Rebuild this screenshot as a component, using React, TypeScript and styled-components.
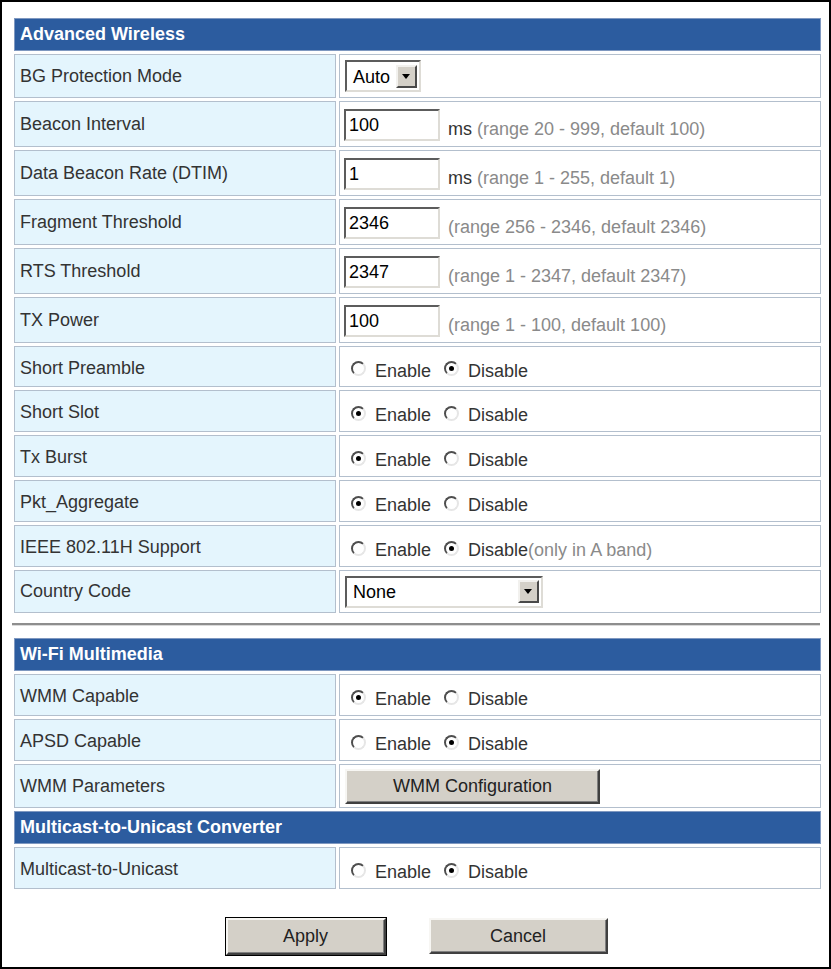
import styled, { createGlobalStyle } from 'styled-components';

const GlobalStyle = createGlobalStyle`
  body {
    margin: 0;
    background: #ffffff;
    font-family: 'Liberation Sans', Arial, sans-serif;
  }
`;

type Choice = { kind: 'radio'; on: boolean; note?: string };
type Field = { kind: 'input'; value: string; unit?: string; hint: string };
type Pick = { kind: 'select'; value: string; width: number };
type Action = { kind: 'button'; text: string };
type RowData = { label: string; h: number; body: Choice | Field | Pick | Action };

const wireless: RowData[] = [
  { label: 'BG Protection Mode', h: 44, body: { kind: 'select', value: 'Auto', width: 76 } },
  { label: 'Beacon Interval', h: 46, body: { kind: 'input', value: '100', unit: 'ms', hint: '(range 20 - 999, default 100)' } },
  { label: 'Data Beacon Rate (DTIM)', h: 46, body: { kind: 'input', value: '1', unit: 'ms', hint: '(range 1 - 255, default 1)' } },
  { label: 'Fragment Threshold', h: 46, body: { kind: 'input', value: '2346', hint: '(range 256 - 2346, default 2346)' } },
  { label: 'RTS Threshold', h: 46, body: { kind: 'input', value: '2347', hint: '(range 1 - 2347, default 2347)' } },
  { label: 'TX Power', h: 46, body: { kind: 'input', value: '100', hint: '(range 1 - 100, default 100)' } },
  { label: 'Short Preamble', h: 41, body: { kind: 'radio', on: false } },
  { label: 'Short Slot', h: 42, body: { kind: 'radio', on: true } },
  { label: 'Tx Burst', h: 42, body: { kind: 'radio', on: true } },
  { label: 'Pkt_Aggregate', h: 42, body: { kind: 'radio', on: true } },
  { label: 'IEEE 802.11H Support', h: 42, body: { kind: 'radio', on: false, note: '(only in A band)' } },
  { label: 'Country Code', h: 43, body: { kind: 'select', value: 'None', width: 198 } },
];

const multimedia: RowData[] = [
  { label: 'WMM Capable', h: 42, body: { kind: 'radio', on: true } },
  { label: 'APSD Capable', h: 42, body: { kind: 'radio', on: false } },
  { label: 'WMM Parameters', h: 44, body: { kind: 'button', text: 'WMM Configuration' } },
];

const multicast: RowData[] = [
  { label: 'Multicast-to-Unicast', h: 42, body: { kind: 'radio', on: false } },
];

const Cell = ({ body }: { body: RowData['body'] }) => {
  if (body.kind === 'select') {
    return (
      <SelectBox $w={body.width}>
        <SelectText>{body.value}</SelectText>
        <SelectArrow />
      </SelectBox>
    );
  }
  if (body.kind === 'input') {
    return (
      <Inline>
        <TextInput defaultValue={body.value} />
        {body.unit && <Unit>{body.unit}</Unit>}
        <Hint>{body.hint}</Hint>
      </Inline>
    );
  }
  if (body.kind === 'button') {
    return <PushButton $w={255} $h={35}>{body.text}</PushButton>;
  }
  return (
    <RadioLine>
      <RadioItem>
        <RadioDot $checked={body.on} />
        Enable
      </RadioItem>
      <RadioItem>
        <RadioDot $checked={!body.on} />
        Disable
      </RadioItem>
      {body.note && <Hint $tight>{body.note}</Hint>}
    </RadioLine>
  );
};

const Rows = ({ rows }: { rows: RowData[] }) => (
  <>
    {rows.map((r) => (
      <Row key={r.label} $h={r.h}>
        <LabelCell $shift={r.body.kind === 'radio'}>{r.label}</LabelCell>
        <ValueCell>
          <Cell body={r.body} />
        </ValueCell>
      </Row>
    ))}
  </>
);

const App = () => {
  return (
    <Frame>
      <GlobalStyle />
      <Section>
        <HeaderBar>Advanced Wireless</HeaderBar>
        <Rows rows={wireless} />
      </Section>
      <Divider />
      <Section>
        <HeaderBar>Wi-Fi Multimedia</HeaderBar>
        <Rows rows={multimedia} />
        <HeaderBar>Multicast-to-Unicast Converter</HeaderBar>
        <Rows rows={multicast} />
      </Section>
      <ActionBar>
        <PushButton $w={160} $h={37} $primary>Apply</PushButton>
        <PushButton $w={179} $h={36}>Cancel</PushButton>
      </ActionBar>
    </Frame>
  );
};

const Frame = styled.div`
  width: 831px;
  height: 969px;
  box-sizing: border-box;
  border: 2px solid #000000;
  padding: 16px 8px 0 12px;
  font-size: 18px;
  color: #333333;
`;
const Section = styled.div`
  display: flex;
  flex-direction: column;
  gap: 3px;
`;
const HeaderBar = styled.div`
  height: 33px;
  box-sizing: border-box;
  display: flex;
  align-items: center;
  padding: 0 5px;
  background-color: #2c5c9f;
  border: 1px solid #7f98c0;
  color: #ffffff;
  font-weight: 700;
`;
const Row = styled.div<{ $h: number }>`
  display: grid;
  grid-template-columns: 322px 1fr;
  gap: 3px;
  height: ${(p) => p.$h}px;
`;
const LabelCell = styled.div<{ $shift?: boolean }>`
  box-sizing: border-box;
  display: flex;
  align-items: center;
  padding: ${(p) => (p.$shift ? '3px 5px 0' : '0 5px')};
  background-color: #e4f5fd;
  border: 1px solid #b3bfcd;
`;
const ValueCell = styled.div`
  box-sizing: border-box;
  display: flex;
  align-items: center;
  padding: 0 5px;
  background-color: #ffffff;
  border: 1px solid #b3bfcd;
`;
const Inline = styled.div`
  white-space: nowrap;
  padding-top: 2px;
`;
const RadioLine = styled.div`
  display: flex;
  align-items: center;
  white-space: nowrap;
  padding-top: 9px;
`;
const TextInput = styled.input`
  width: 96px;
  height: 32px;
  box-sizing: border-box;
  margin: 0 8px 0 -1px;
  padding: 0 3px;
  border: 2px solid;
  border-color: #5c5c5c #dedcd6 #dedcd6 #5c5c5c;
  font-family: 'Liberation Sans', Arial, sans-serif;
  font-size: 18px;
  color: #000000;
  vertical-align: 4px;
  outline: none;
`;
const Unit = styled.span`
  color: #333333;
  margin-right: 5px;
`;
const Hint = styled.span<{ $tight?: boolean }>`
  color: #8a8a8a;
  margin-left: ${(p) => (p.$tight ? '-13px' : '0')};
`;
const SelectBox = styled.div<{ $w: number }>`
  width: ${(p) => p.$w}px;
  height: 32px;
  box-sizing: border-box;
  display: flex;
  align-items: center;
  padding: 1px 2px;
  border: 2px solid;
  border-color: #5c5c5c #dedcd6 #dedcd6 #5c5c5c;
  background: #ffffff;
  color: #000000;
`;
const SelectText = styled.span`
  flex: 1;
  padding: 2px 0 0 4px;
`;
const SelectArrow = styled.span`
  position: relative;
  width: 21px;
  height: 23px;
  box-sizing: border-box;
  background: #d4d0c8;
  border: 2px solid;
  border-color: #f2f1ee #4a4a4a #4a4a4a #f2f1ee;
  &::after {
    content: '';
    position: absolute;
    left: 4px;
    top: 7px;
    border-left: 4.5px solid transparent;
    border-right: 4.5px solid transparent;
    border-top: 5px solid #000000;
  }
`;
const RadioItem = styled.span`
  display: inline-flex;
  align-items: center;
  margin-right: 13px;
  color: #333333;
  &:first-child {
    margin-left: 6px;
  }
`;
const RadioDot = styled.span<{ $checked: boolean }>`
  position: relative;
  width: 15px;
  height: 15px;
  box-sizing: border-box;
  margin: -5px 9px 0 0;
  border-radius: 50%;
  border: 2px solid;
  border-color: #4e4e4e #e6e6e6 #e6e6e6 #4e4e4e;
  background: #ffffff;
  &::after {
    content: '';
    display: ${(p) => (p.$checked ? 'block' : 'none')};
    position: absolute;
    left: 3px;
    top: 3px;
    width: 5px;
    height: 5px;
    border-radius: 50%;
    background: #000000;
  }
`;
const Divider = styled.div`
  margin: 10px 1px 12px -2px;
  height: 0;
  border-top: 2px solid #8e8e8e;
  border-bottom: 1px solid #dadada;
`;
const ActionBar = styled.div`
  display: flex;
  justify-content: center;
  align-items: flex-start;
  gap: 43px;
  margin-top: 29px;
  padding-right: 2px;
`;
const PushButton = styled.button<{ $w: number; $h: number; $primary?: boolean }>`
  width: ${(p) => p.$w}px;
  height: ${(p) => p.$h}px;
  box-sizing: border-box;
  background-color: #d4d0c8;
  border: 2px solid;
  border-color: #f7f6f3 #404040 #404040 #f7f6f3;
  box-shadow: ${(p) => (p.$primary ? '0 0 0 1px #000000, inset -1px -1px #808080' : 'inset -1px -1px #808080')};
  font-family: 'Liberation Sans', Arial, sans-serif;
  font-size: 18px;
  color: #222222;
  cursor: pointer;
  padding: 0;
`;

export default App;
